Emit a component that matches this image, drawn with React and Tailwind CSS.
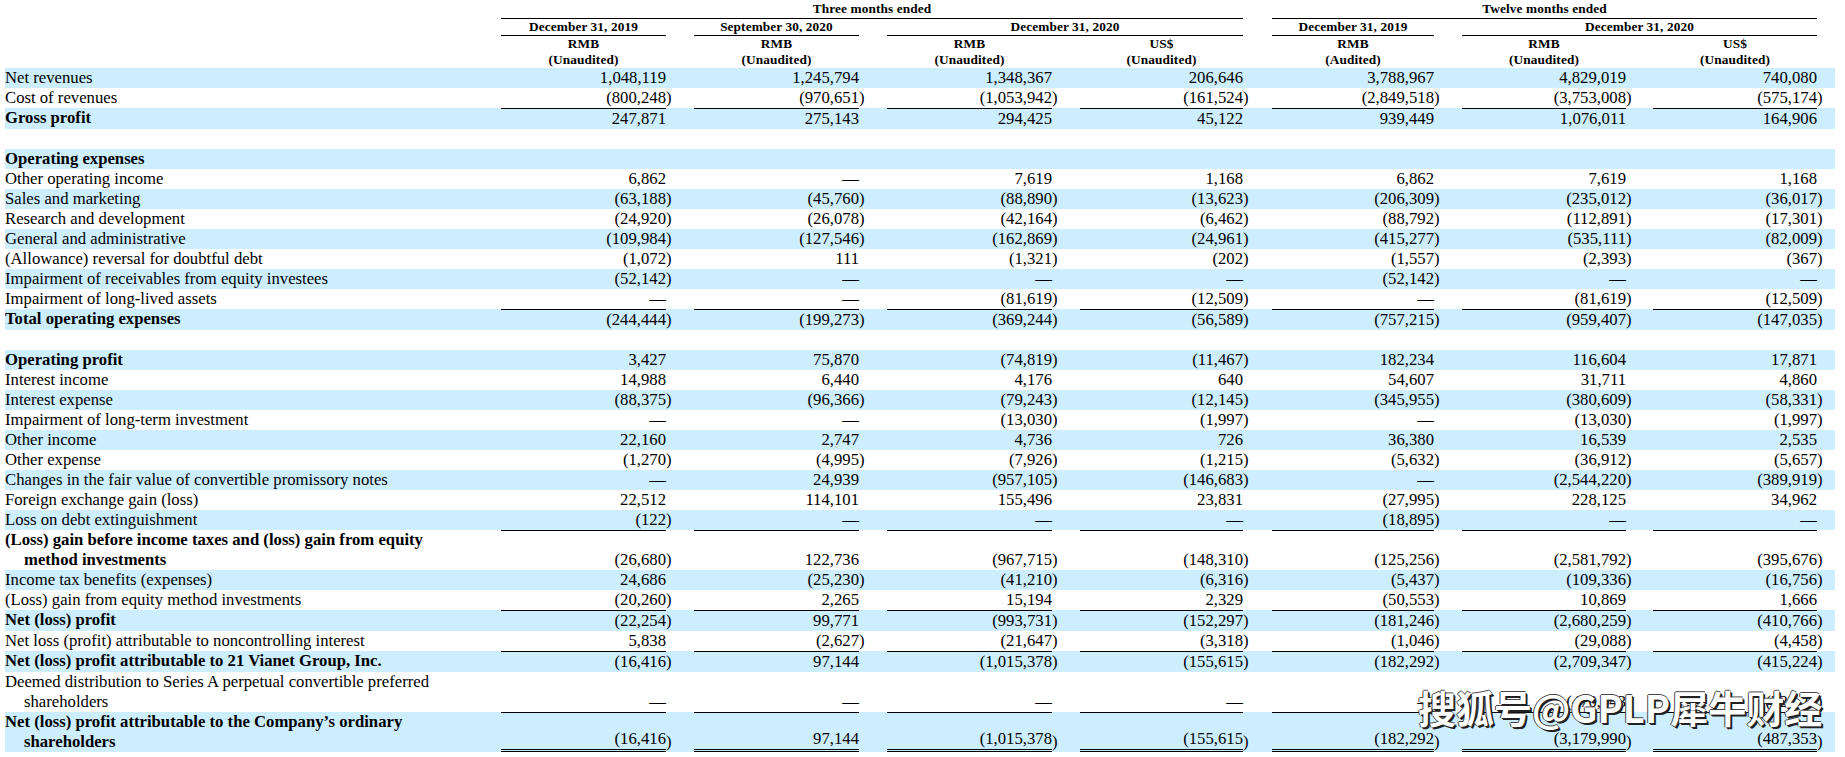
import { Fragment } from "react";

// 22 tracks: label, then (number, paren, gap) x 7, last gap is the right margin
const GRID =
  "grid grid-cols-[496px_165px_6px_22px_165px_6px_22px_165px_6px_22px_163px_6px_23px_162px_6px_22px_164px_6px_21px_164px_6px_12px]";

const rows = [
  { label: ["Net revenues"], band: true, v: ["1,048,119", "1,245,794", "1,348,367", "206,646", "3,788,967", "4,829,019", "740,080"] },
  { label: ["Cost of revenues"], v: ["(800,248)", "(970,651)", "(1,053,942)", "(161,524)", "(2,849,518)", "(3,753,008)", "(575,174)"] },
  { label: ["Gross profit"], band: true, bold: true, top: true, v: ["247,871", "275,143", "294,425", "45,122", "939,449", "1,076,011", "164,906"] },
  { spacer: true },
  { label: ["Operating expenses"], band: true, bold: true },
  { label: ["Other operating income"], v: ["6,862", "—", "7,619", "1,168", "6,862", "7,619", "1,168"] },
  { label: ["Sales and marketing"], band: true, v: ["(63,188)", "(45,760)", "(88,890)", "(13,623)", "(206,309)", "(235,012)", "(36,017)"] },
  { label: ["Research and development"], v: ["(24,920)", "(26,078)", "(42,164)", "(6,462)", "(88,792)", "(112,891)", "(17,301)"] },
  { label: ["General and administrative"], band: true, v: ["(109,984)", "(127,546)", "(162,869)", "(24,961)", "(415,277)", "(535,111)", "(82,009)"] },
  { label: ["(Allowance) reversal for doubtful debt"], v: ["(1,072)", "111", "(1,321)", "(202)", "(1,557)", "(2,393)", "(367)"] },
  { label: ["Impairment of receivables from equity investees"], band: true, v: ["(52,142)", "—", "—", "—", "(52,142)", "—", "—"] },
  { label: ["Impairment of long-lived assets"], v: ["—", "—", "(81,619)", "(12,509)", "—", "(81,619)", "(12,509)"] },
  { label: ["Total operating expenses"], band: true, bold: true, top: true, v: ["(244,444)", "(199,273)", "(369,244)", "(56,589)", "(757,215)", "(959,407)", "(147,035)"] },
  { spacer: true },
  { label: ["Operating profit"], band: true, bold: true, v: ["3,427", "75,870", "(74,819)", "(11,467)", "182,234", "116,604", "17,871"] },
  { label: ["Interest income"], v: ["14,988", "6,440", "4,176", "640", "54,607", "31,711", "4,860"] },
  { label: ["Interest expense"], band: true, v: ["(88,375)", "(96,366)", "(79,243)", "(12,145)", "(345,955)", "(380,609)", "(58,331)"] },
  { label: ["Impairment of long-term investment"], v: ["—", "—", "(13,030)", "(1,997)", "—", "(13,030)", "(1,997)"] },
  { label: ["Other income"], band: true, v: ["22,160", "2,747", "4,736", "726", "36,380", "16,539", "2,535"] },
  { label: ["Other expense"], v: ["(1,270)", "(4,995)", "(7,926)", "(1,215)", "(5,632)", "(36,912)", "(5,657)"] },
  { label: ["Changes in the fair value of convertible promissory notes"], band: true, v: ["—", "24,939", "(957,105)", "(146,683)", "—", "(2,544,220)", "(389,919)"] },
  { label: ["Foreign exchange gain (loss)"], v: ["22,512", "114,101", "155,496", "23,831", "(27,995)", "228,125", "34,962"] },
  { label: ["Loss on debt extinguishment"], band: true, v: ["(122)", "—", "—", "—", "(18,895)", "—", "—"] },
  { label: ["(Loss) gain before income taxes and (loss) gain from equity", "method investments"], bold: true, top: true, v: ["(26,680)", "122,736", "(967,715)", "(148,310)", "(125,256)", "(2,581,792)", "(395,676)"] },
  { label: ["Income tax benefits (expenses)"], band: true, v: ["24,686", "(25,230)", "(41,210)", "(6,316)", "(5,437)", "(109,336)", "(16,756)"] },
  { label: ["(Loss) gain from equity method investments"], v: ["(20,260)", "2,265", "15,194", "2,329", "(50,553)", "10,869", "1,666"] },
  { label: ["Net (loss) profit"], band: true, bold: true, top: true, v: ["(22,254)", "99,771", "(993,731)", "(152,297)", "(181,246)", "(2,680,259)", "(410,766)"] },
  { label: ["Net loss (profit) attributable to noncontrolling interest"], v: ["5,838", "(2,627)", "(21,647)", "(3,318)", "(1,046)", "(29,088)", "(4,458)"] },
  { label: ["Net (loss) profit attributable to 21 Vianet Group, Inc."], band: true, bold: true, top: true, v: ["(16,416)", "97,144", "(1,015,378)", "(155,615)", "(182,292)", "(2,709,347)", "(415,224)"] },
  { label: ["Deemed distribution to Series A perpetual convertible preferred", "shareholders"], v: ["—", "—", "—", "—", "—", "(470,643)", "(72,129)"] },
  { label: ["Net (loss) profit attributable to the Company’s ordinary", "shareholders"], band: true, bold: true, top: true, dbl: true, v: ["(16,416)", "97,144", "(1,015,378)", "(155,615)", "(182,292)", "(3,179,990)", "(487,353)"] },
];

function Row({ row }) {
  if (row.spacer) return <div className="h-[20px]" />;
  return (
    <div className={`${GRID} ${row.band ? "bg-[#cceeff]" : ""}`}>
      <div className={row.bold ? "font-bold" : ""}>
        {row.label.map((t, i) => (
          <div key={i} className={i > 0 ? "pl-[19px]" : ""}>
            {t}
          </div>
        ))}
      </div>
      {row.v &&
        row.v.map((val, i) => {
          const neg = val.startsWith("(");
          return (
            <Fragment key={i}>
              <div
                className={`flex items-end justify-end ${row.top ? "border-t border-black" : ""} ${
                  row.dbl ? "border-b-[3px] border-double border-black" : ""
                }`}
              >
                {neg ? val.slice(0, -1) : val}
              </div>
              <div className="flex items-end">{neg ? ")" : ""}</div>
              <div />
            </Fragment>
          );
        })}
    </div>
  );
}

function Header() {
  return (
    <div className="font-bold text-[13.3px] tracking-[0.1px]">
      <div className={GRID}>
        <div className="col-start-2 col-span-10 h-[19px] border-b border-black text-center leading-[18px]">Three months ended</div>
        <div className="col-start-14 col-span-7 h-[19px] border-b border-black text-center leading-[18px]">Twelve months ended</div>
      </div>
      <div className={GRID}>
        <div className="col-start-2 h-[17px] border-b border-black text-center leading-[16px]">December 31, 2019</div>
        <div className="col-start-5 h-[17px] border-b border-black text-center leading-[16px]">September 30, 2020</div>
        <div className="col-start-8 col-span-4 h-[17px] border-b border-black text-center leading-[16px]">December 31, 2020</div>
        <div className="col-start-14 h-[17px] border-b border-black text-center leading-[16px]">December 31, 2019</div>
        <div className="col-start-17 col-span-4 h-[17px] border-b border-black text-center leading-[16px]">December 31, 2020</div>
      </div>
      <div className={`${GRID} leading-[16px] text-center`}>
        <div className="col-start-2">RMB</div>
        <div className="col-start-5">RMB</div>
        <div className="col-start-8">RMB</div>
        <div className="col-start-11">US$</div>
        <div className="col-start-14">RMB</div>
        <div className="col-start-17">RMB</div>
        <div className="col-start-20">US$</div>
      </div>
      <div className={`${GRID} leading-[16px] text-center`}>
        <div className="col-start-2">(Unaudited)</div>
        <div className="col-start-5">(Unaudited)</div>
        <div className="col-start-8">(Unaudited)</div>
        <div className="col-start-11">(Unaudited)</div>
        <div className="col-start-14">(Audited)</div>
        <div className="col-start-17">(Unaudited)</div>
        <div className="col-start-20">(Unaudited)</div>
      </div>
    </div>
  );
}

export default function App() {
  return (
    <div className="relative w-[1845px] h-[757px] overflow-hidden bg-white text-black font-['Liberation_Serif','Times_New_Roman',serif]">
      <div className="ml-[5px] w-[1830px] text-[16.7px] leading-[20px]">
        <Header />
        {rows.map((row, i) => (
          <Row key={i} row={row} />
        ))}
      </div>
      <div className="absolute left-[1418px] top-[688px] whitespace-nowrap text-white font-bold text-[38px] leading-none font-['Noto_Sans_CJK_SC','Noto_Sans',sans-serif] [text-shadow:2px_2px_0_#222,1px_1px_0_#222,-1px_0_0_#444,0_-1px_0_#444]">
        搜狐号@GPLP犀牛财经
      </div>
    </div>
  );
}
